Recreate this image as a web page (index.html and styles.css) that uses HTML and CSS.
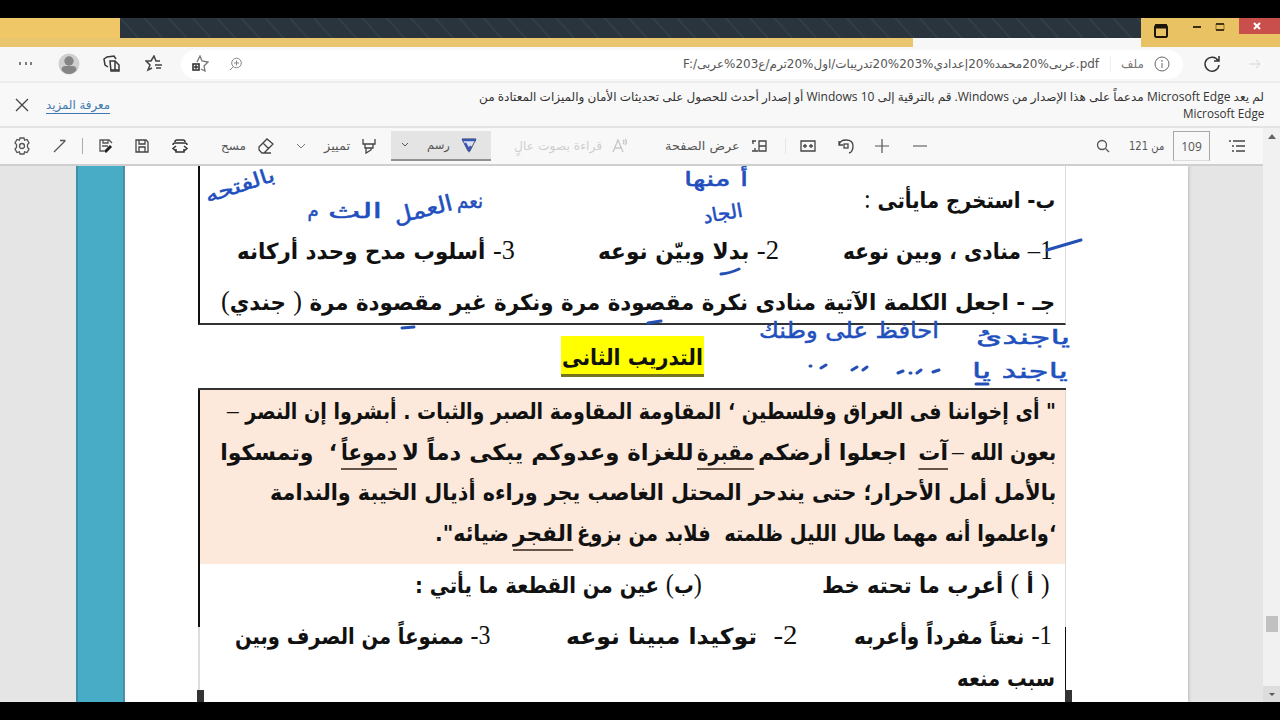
FILE: index.html
```
<!DOCTYPE html>
<html lang="ar">
<head>
  <meta charset="UTF-8">
  <title>عربى 3ع ترم اول.pdf</title>
  <link rel="stylesheet" href="styles.css">
</head>
<body>
  <div class="screen">
    <header class="titlebar">
      <div class="tab-gold"></div>
      <div class="tab-dark"></div>
      <div class="window-buttons">
        <svg class="tab-menu" width="16" height="16" viewBox="0 0 16 16"><path d="M3 2h10l1 2v9l-1 1H3l-1-1V4z" fill="none" stroke="#1d1606" stroke-width="2"/><path d="M2 4h12" stroke="#1d1606" stroke-width="3"/></svg>
        <svg class="min" width="10" height="12" viewBox="0 0 10 12"><path d="M1 7h8" stroke="#3c2c0d" stroke-width="2"/></svg>
        <svg class="max" width="10" height="12" viewBox="0 0 10 12"><path d="M1 3h8v6H1z" fill="none" stroke="#8f7135"/><path d="M1 3h8M1 9h8" stroke="#463614" stroke-width="2"/></svg>
        <div class="close"><svg width="8" height="8" viewBox="0 0 8 8"><path d="M1 1l6 6M7 1L1 7" stroke="#fff" stroke-width="2"/></svg></div>
      </div>
      <div class="strip-gold"></div>
      <div class="strip-light"></div>
    </header>

    <nav class="address-row">
      <svg class="dots" width="16" height="6" viewBox="0 0 16 6"><path d="M2 1v3M8 1v3M13 1v3" stroke="#555" stroke-width="1.5"/></svg>
      <svg class="avatar" width="22" height="22" viewBox="0 0 22 22"><circle cx="11" cy="11" r="10.5" fill="#cfcfcf"/><circle cx="11" cy="8" r="4.7" fill="#858585"/><path d="M3.5 17q0-4 4-4h7q4 0 4 4-3 4-7.500 4T3.500 17z" fill="#858585"/></svg>
      <svg class="collections" width="18" height="18" viewBox="0 0 18 18" fill="none" stroke="#383838" stroke-width="1.5"><path d="M5 12L2 10 1 4l3-2 7-1 2 3"/><path d="M7 6h5l4 4v6H8z"/><path d="M12 6v9M8 15h8"/></svg>
      <svg class="favorites" width="18" height="18" viewBox="0 0 18 18" fill="none" stroke="#444" stroke-width="1.500"><path d="M15 6h-4L9 1 6 6H1l4 4-2 5 4-2"/><path d="M10 10h7M11 13h5"/></svg>
      <div class="address">
        <svg class="add-star" width="18" height="18" viewBox="0 0 18 18" fill="none" stroke="#777" stroke-width="1.3"><path d="M6 7L9 1l2 5 6 1-4 4 1 5-4-2"/><rect x="2" y="9" width="6" height="6" stroke="#333" stroke-width="1.600"/><path d="M3 12h4M5 10v4" stroke="#333"/></svg>
        <svg class="page-zoom" width="14" height="14" viewBox="0 0 14 14" fill="none" stroke="#888"><circle cx="7.500" cy="6" r="4.800"/><path d="M5 6h5M7.500 3.500v5M4 10l-3 3"/></svg>
        <div class="url" dir="ltr"><span class="fit" data-width="416">F:/عربى%20محمد%20إعدادي%203%20تدريبات/اول%20ترم/ع203%عربى.pdf</span></div>
        <i class="url-sep"></i>
        <span class="file-label">ملف</span>
        <svg width="18" height="18" viewBox="0 0 18 18" fill="none" stroke="#666"><circle cx="9" cy="9" r="7"/><path d="M9 5v2M9 8v5"/></svg>
      </div>
      <svg class="refresh" width="20" height="20" viewBox="0 0 20 20" fill="none" stroke="#333" stroke-width="1.500"><path d="M16 6.500A7 7 0 1 0 17 11M17 2v5h-5"/></svg>
      <svg class="forward" width="12" height="12" viewBox="0 0 12 12" fill="none" stroke="#d5d5d5"><path d="M0 6h11M7 2l4 4-4 4"/></svg>
    </nav>

    <section class="notice">
      <svg class="dismiss" width="14" height="14" viewBox="0 0 14 14"><path d="M1 1l12 12M13 1L1 13" stroke="#444" stroke-width="1.300"/></svg>
      <a class="more"><span class="fit" data-width="64">معرفة المزيد</span></a>
      <div class="notice-text" dir="rtl">
        <div><span class="fit" data-width="785">لم يعد Microsoft Edge مدعماً على هذا الإصدار من Windows. قم بالترقية إلى Windows 10 أو إصدار أحدث للحصول على تحديثات الأمان والميزات المعتادة من</span></div>
        <div><span class="fit" data-width="81">Microsoft Edge</span></div>
      </div>
    </section>

    <div class="pdf-toolbar">
      <svg width="18" height="18" viewBox="0 0 18 18" fill="none" stroke="#555" stroke-width="1.300"><path d="M7 1h4l.6 2.200 2.400-.7 2 3.500-1.500 1.500v3L16 12l-2 3.500-2.400-.7L11 17H7l-.6-2.200-2.400.7L2 12l1.500-1.500v-3L2 6l2-3.500 2.400.7z"/><circle cx="9" cy="9" r="2.500"/></svg>
      <svg width="14" height="14" viewBox="0 0 14 14" fill="none" stroke="#555" stroke-width="1.300"><path d="M1 13L12 2M7 1.500h5.500"/></svg>
      <i class="divider"></i>
      <svg width="16" height="16" viewBox="0 0 16 16" fill="none" stroke="#555" stroke-width="1.300"><path d="M6 13H2V2h9l3 3M5 2v3h5V2M4 8h6"/><path d="M7 14l6-6" stroke="#222" stroke-width="3"/></svg>
      <svg width="16" height="16" viewBox="0 0 16 16" fill="none" stroke="#444" stroke-width="1.300"><path d="M2 14V2h10l2 2v10H2zM5 2v4h6V2M5 14V9h6v5"/></svg>
      <svg width="18" height="16" viewBox="0 0 18 16" fill="none" stroke="#333" stroke-width="1.500"><path d="M2 7q0-2 2-2h10q2 0 2 2M4 4q0-2 2-2h6q2 0 2 2M5 11v3h8v-3"/><path d="M5 8l-3 2.500L5 13M13 8l3 2.500-3 2.500"/></svg>
      <span class="label"><span class="fit" data-width="25">مسح</span></span>
      <svg width="18" height="18" viewBox="0 0 18 18" fill="none" stroke="#444" stroke-width="1.300"><path d="M2 10l8-8 6 5-9 9H5l-3-3zM6 6l6 6M7 16h7"/></svg>
      <svg width="10" height="6" viewBox="0 0 10 6" fill="none" stroke="#777"><path d="M1 1l4 4 4-4"/></svg>
      <span class="label"><span class="fit" data-width="26">تمييز</span></span>
      <svg width="16" height="18" viewBox="0 0 16 18" fill="none" stroke="#444" stroke-width="1.300"><path d="M2 2v5h12V2M4 7v4h8V7M5 11v5l5-3v-2"/></svg>
      <div class="draw">
        <svg width="8" height="6" viewBox="0 0 8 6" fill="none" stroke="#555"><path d="M1 1l3 3 3-3"/></svg>
        <span class="fit" data-width="23">رسم</span>
        <svg width="18" height="16" viewBox="0 0 18 16"><path d="M2 2h14l-6 12H8z" fill="#dce2f5" stroke="#555"/><path d="M2 3h14M5 6l4 7 2-4" stroke="#3a57b0" stroke-width="2.500" fill="none"/></svg>
      </div>
      <span class="label faded"><span class="fit" data-width="88">قراءة بصوت عالٍ</span></span>
      <svg width="16" height="16" viewBox="0 0 16 16" fill="none" stroke="#c6c6c6" stroke-width="1.300"><path d="M1 14L6 2l5 12M3 10h6M11 2q2 2 0 4M13 1q3 3 0 6"/></svg>
      <span class="label"><span class="fit" data-width="75">عرض الصفحة</span></span>
      <svg width="16" height="14" viewBox="0 0 16 14" fill="none" stroke="#444" stroke-width="1.300"><path d="M8 2h7v10H8zM8 7h7M1 2h4M1 12h6M2 2v3M4 9v3"/></svg>
      <i class="divider light"></i>
      <svg width="16" height="14" viewBox="0 0 16 14" fill="none" stroke="#444" stroke-width="1.300"><path d="M1 2h14v10H1zM3 7h4M9 7h4M5 5v4M11 5v4"/></svg>
      <svg width="18" height="18" viewBox="0 0 18 18" fill="none" stroke="#444" stroke-width="1.300"><path d="M2 8q1-5 7-5 7 0 7 6t-4 7M2 4v4h4"/><rect x="7" y="7" width="4" height="4"/></svg>
      <svg width="14" height="14" viewBox="0 0 14 14"><path d="M0 7h14M7 0v14" stroke="#555" stroke-width="1.200"/></svg>
      <svg width="14" height="14" viewBox="0 0 14 14"><path d="M0 7h14" stroke="#666" stroke-width="1.200"/></svg>
      <svg class="label" width="14" height="14" viewBox="0 0 14 14" fill="none" stroke="#555" stroke-width="1.300"><circle cx="6" cy="6" r="4.500"/><path d="M9.500 9.500L13 13"/></svg>
      <span class="label"><span class="fit" data-width="35">من 121</span></span>
      <span class="label page-number">109</span>
      <svg width="18" height="12" viewBox="0 0 18 12" fill="none" stroke="#444" stroke-width="1.500"><path d="M5 1h12M8 6h9M8 11h9M1 1h2M4 6h2M4 11h2"/></svg>
    </div>

    <main class="viewer">
      <div class="page-edge"></div>
      <div class="page" dir="rtl">
        <section class="box box-top">
          <div class="row"><span class="fit" data-width="191">ب- استخرج مايأتى <b>:</b></span></div>
          <div class="row items">
            <span class="fit" data-width="209"><b>1–</b> منادى ، وبين نوعه</span>
            <span class="fit second" data-width="181"><b>2-</b> بدلا وبيّن نوعه</span>
            <span class="fit third" data-width="278"><b>3-</b> أسلوب مدح وحدد أركانه</span>
          </div>
          <div class="row"><span class="fit" data-width="834">جـ - اجعل الكلمة الآتية منادى نكرة مقصودة مرة ونكرة غير مقصودة مرة <b>(</b> جندي<b>)</b></span></div>
        </section>

        <h2><span class="fit" data-width="141">التدريب الثانى</span></h2>

        <section class="box-bottom">
          <div class="passage">
            <p><span class="fit" data-width="829">" أى إخواننا فى العراق وفلسطين ‘ المقاومة المقاومة الصبر والثبات . أبشروا إن النصر <b>–</b></span></p>
            <p>
              <span class="fit" data-width="104">بعون الله <b>–</b></span>
              <span class="fit" data-width="30"><u>آت</u></span>
              <span class="fit" data-width="156">&nbsp;اجعلوا أرضكم</span>
              <span class="fit" data-width="57"><u>مقبرة</u></span>
              <span class="fit" data-width="292">للغزاة وعدوكم يبكى دماً لا</span>
              <span class="fit" data-width="56"><u>دموعاً</u></span>
              <span class="fit" data-width="117">‘&nbsp; وتمسكوا</span>
            </p>
            <p><span class="fit" data-width="786">بالأمل أمل الأحرار؛ حتى يندحر المحتل الغاصب يجر وراءه أذيال الخيبة والندامة</span></p>
            <p>
              <span class="fit" data-width="479">‘واعلموا أنه مهما طال الليل ظلمته&nbsp; فلابد من بزوغ</span>
              <span class="fit" data-width="60"><u>الفجر</u></span>
              <span class="fit" data-width="74">ضيائه".</span>
            </p>
          </div>
          <div class="row questions">
            <span class="fit" data-width="228"><b>(</b> أ <b>)</b> أعرب ما تحته خط</span>
            <span class="fit second" data-width="287"><b>(</b>ب<b>)</b> عين من القطعة ما يأتي :</span>
          </div>
          <div class="row answers">
            <span class="fit" data-width="198"><b>1-</b> نعتاً مفرداً وأعربه</span>
            <span class="fit second" data-width="231"><b>2-</b>&nbsp; توكيدا مبينا نوعه</span>
            <span class="fit third" data-width="255"><b>3-</b> ممنوعاً من الصرف وبين</span>
          </div>
          <div class="row last"><span class="fit" data-width="98">سبب منعه</span></div>
        </section>
      </div>

      <!-- pen annotations -->
      <svg class="ink" width="1280" height="536" viewBox="0 166 1280 536">
        <g class="ink-text">
          <text x="240" y="192" font-size="20" textLength="72" lengthAdjust="spacingAndGlyphs" transform="rotate(-18 240 186)">بالفتحه</text>
          <text x="470" y="208" font-size="20" textLength="26" lengthAdjust="spacingAndGlyphs">نعم</text>
          <text x="423" y="217" font-size="22" textLength="60" lengthAdjust="spacingAndGlyphs" transform="rotate(-14 423 210)">العمل</text>
          <text x="355" y="218" font-size="21" textLength="54" lengthAdjust="spacingAndGlyphs">الث</text>
          <text x="313" y="217" font-size="18">م</text>
          <text x="716" y="186" font-size="20" textLength="64" lengthAdjust="spacingAndGlyphs">أ منها</text>
          <text x="723" y="220" font-size="19" textLength="40" lengthAdjust="spacingAndGlyphs" transform="rotate(-10 723 215)">الجاد</text>
          <text x="1023" y="344" font-size="20" textLength="94" lengthAdjust="spacingAndGlyphs">ياجندىُ</text>
          <text x="849" y="338" font-size="22" textLength="180" lengthAdjust="spacingAndGlyphs">احافظ على وطنك</text>
          <text x="1020" y="378" font-size="21" textLength="96" lengthAdjust="spacingAndGlyphs">ياجند يا</text>
        </g>
        <path d="M1047 250q17-5 34-10M721 274q10-1 18-5M648 323l13-2M402 328l12-1M976 384h12M810 366l1 0M821 368l5-3M852 370l5-3M863 370l4-3M898 373l5-2M910 373l1 0M917 373l4-3M933 372l6-2"/>
      </svg>
      <div class="crop-marks"><i></i><i></i></div>
    </main>

    <aside class="scrollbar">
      <svg width="8" height="5" viewBox="0 0 8 5"><path d="M0 5l4-5 4 5z" fill="#666"/></svg>
      <div class="thumb"></div>
      <div class="scroll-down"><svg width="6" height="4" viewBox="0 0 6 4"><path d="M0 1h6L3 4z" fill="#555"/></svg></div>
    </aside>
  </div>
  <script src="script.js"></script>
</body>
</html>
```
FILE: styles.css
```
* {
  box-sizing: border-box;
}

body {
  margin: 0;
  background: #000;
  font-family: "DejaVu Sans", sans-serif;
  overflow: hidden;
}

svg {
  display: block;
  flex: none;
}

.screen {
  position: relative;
  width: 1280px;
  height: 720px;
  padding: 18px 0;
  background: #000;
}

.fit {
  display: block;
  flex: none;
  white-space: nowrap;
}

.fit > span {
  display: inline-block;
}

/* window frame */
.titlebar {
  display: grid;
  grid-template-columns: 120px 793px 228px 139px;
  grid-template-rows: 20px 9px;
  height: 29px;
}

.tab-gold {
  background: #efc767;
}

.tab-dark {
  grid-column: 2 / 4;
  background: repeating-linear-gradient(48deg, #29343c 0 12px, #303e47 13px 14px, #29343c 15px 18px);
}

.window-buttons {
  grid-column: 4;
  grid-row: 1 / 3;
  display: flex;
  background: #e9c263;
}

.tab-menu {
  margin: 5px 0 0 12px;
}

.min {
  margin: 2px 0 0 23px;
}

.max {
  margin: 3px 0 0 13px;
}

.close {
  display: flex;
  align-items: center;
  justify-content: center;
  width: 41px;
  height: 16px;
  margin-left: auto;
  background: #c94f4c;
}

.close svg {
  margin-right: 6px;
}

.strip-gold {
  grid-column: 1 / 3;
  grid-row: 2;
  background: #e9c56f;
}

.strip-light {
  background: #f7f7f7;
  grid-row: 2;
}

/* address bar */
.address-row {
  display: flex;
  align-items: center;
  height: 36px;
  background: #f7f7f7;
  border-bottom: 2px solid #ececec;
}

.dots {
  margin-left: 18px;
}

.avatar {
  margin-left: 24px;
}

.collections {
  margin-left: 23px;
}

.favorites {
  margin-left: 24px;
}

.address {
  display: flex;
  align-items: center;
  width: 1002px;
  height: 29px;
  margin-left: 18px;
  padding: 0 12px 0 10px;
  border-radius: 15px;
  background: #fff;
}

.page-zoom {
  margin-left: 20px;
}

.url {
  margin-left: 440px;
  font-size: 12px;
  color: #555;
}

.url-sep {
  width: 1px;
  height: 16px;
  margin-left: 11px;
  background: #eee;
}

.file-label {
  width: 26px;
  margin: 0 6px 0 10px;
  font-size: 12px;
  color: #777;
}

.refresh {
  margin-left: 19px;
}

.forward {
  margin-left: 27px;
}

/* notification */
.notice {
  display: flex;
  height: 45px;
  background: #f8f8f8;
  border-bottom: 2px solid #e4e4e4;
}

.dismiss {
  margin: 15px 0 0 15px;
}

.more {
  margin: 14px 0 0 17px;
  font-size: 12px;
  line-height: 16px;
  color: #3f78b0;
}

.more .fit {
  border-bottom: 1px solid #3f78b0;
}

.notice-text {
  flex: 1;
  margin: 5px 16px 0 0;
  font-family: "Open Sans", "DejaVu Sans", sans-serif;
  font-size: 12px;
  line-height: 17px;
  color: #333;
}

/* pdf toolbar */
.pdf-toolbar {
  display: grid;
  grid-template-columns: 44px 32px 12px 36px 36px 40px 46px 39px 32px 33px 37px 104px 111px 36px 102px 37px 16px 30px 46px 26px 50px 165px 54px 46px 54px;
  align-items: center;
  justify-items: center;
  width: 1264px;
  height: 38px;
  background: #f8f8f8;
  border-bottom: 2px solid #cfcfcf;
  font-size: 12px;
  color: #555;
}

.label {
  justify-self: end;
}

.faded {
  color: #cfcfcf;
}

.divider {
  width: 1px;
  height: 16px;
  background: #aaa;
}

.divider.light {
  background: #e6e6e6;
}

.draw {
  display: flex;
  align-items: center;
  justify-self: end;
  width: 100px;
  height: 30px;
  padding: 0 10px;
  background: #e4e4e4;
  border-bottom: 2px solid #919191;
}

.draw .fit {
  margin: 0 10px 0 18px;
}

.page-number {
  width: 37px;
  height: 30px;
  border: 1px solid #a8a8a8;
  border-bottom-color: #ddd;
  font: 12px/30px "Open Sans", sans-serif;
  text-align: center;
}

/* document */
.viewer {
  position: relative;
  display: flex;
  height: 536px;
  padding-left: 76px;
  background: #e5e5e5;
  overflow: hidden;
}

.page-edge {
  width: 49px;
  background: #49acc6;
  border-left: 2px solid #3c91a8;
  border-right: 2px solid #3b8da4;
}

.page {
  width: 1063px;
  padding: 0 122px 0 73px;
  background: #fff;
  box-shadow: 1px 0 3px #bbb;
  color: #111;
  font-size: 22px;
  font-weight: bold;
}

.page b {
  font-family: "Liberation Serif", serif;
  font-size: 27px;
  font-weight: normal;
  line-height: 1;
}

.box-top {
  height: 159px;
  padding-top: 9px;
  border-left: 2px solid #111;
  border-right: 1px solid #ddd;
  border-bottom: 2px solid #333;
}

.row {
  display: flex;
  height: 51px;
  padding-right: 10px;
  line-height: 51px;
}

.row.items,
.row.answers {
  padding-right: 13px;
}

.items .second {
  margin-right: 64px;
}

.items .third {
  margin-right: 83px;
}

h2 {
  width: 143px;
  height: 41px;
  margin: 11px 362px 11px 0;
  padding-right: 1px;
  background: #ff0;
  border-bottom: 3px solid #77751c;
  font-size: 22px;
  line-height: 44px;
}

/* the side rules change weight part way down */
.box-bottom {
  height: 315px;
  padding: 0 1px 0 2px;
  border-top: 2px solid #333;
  background:
    linear-gradient(#111 0 237px, #ddd 237px) left / 2px 100% no-repeat,
    linear-gradient(#e2d8d2 0 237px, #111 237px) right / 1px 100% no-repeat;
}

.passage {
  height: 174px;
  padding: 2px 9px 0 0;
  background: #fce9db;
}

.passage p {
  display: flex;
  gap: 4px;
  height: 40.5px;
  margin: 0;
  line-height: 40px;
}

.passage u {
  text-decoration-thickness: 2px;
  text-underline-offset: 8px;
  text-decoration-color: #66554a;
}

.row.questions {
  padding-right: 15px;
  height: 47px;
  line-height: 43px;
}

.questions .second {
  margin-right: 120px;
}

.answers .second {
  margin-right: 57px;
}

.answers .third {
  margin-right: 76px;
}

.row.last {
  height: 36px;
  line-height: 34px;
}

.ink {
  position: absolute;
  left: 0;
  top: 0;
  fill: none;
  stroke: #2450b5;
  stroke-width: 3;
  stroke-linecap: round;
}

.ink-text {
  fill: #1f50bd;
  stroke: #1f50bd;
  stroke-width: 0.5;
  text-anchor: middle;
}

.crop-marks {
  position: absolute;
  left: 197px;
  bottom: 0;
  display: flex;
  justify-content: space-between;
  width: 875px;
}

.crop-marks i {
  width: 7px;
  height: 12px;
  background: #333;
}

/* scrollbar */
.scrollbar {
  position: absolute;
  right: 0;
  top: 128px;
  display: flex;
  flex-direction: column;
  align-items: center;
  width: 17px;
  height: 574px;
  padding-top: 6px;
  background: #f1f1f1;
}

.thumb {
  width: 12px;
  height: 16px;
  margin-top: 477px;
  background: #c1c1c1;
}

.scroll-down {
  display: flex;
  align-items: center;
  justify-content: center;
  width: 17px;
  height: 16px;
  margin-top: auto;
  background: #ddd;
}
```
FILE: script.js
```
// squeeze or stretch each run of text to the width of its column
document.querySelectorAll(".fit").forEach(el => {
  const inner = document.createElement("span");
  while (el.firstChild) inner.appendChild(el.firstChild);
  el.appendChild(inner);

  const rtl = getComputedStyle(el).direction === "rtl";
  const scale = el.dataset.width / inner.offsetWidth;
  inner.style.transformOrigin = rtl ? "right center" : "left center";
  inner.style.transform = `scaleX(${scale})`;
  el.style.width = el.dataset.width + "px";
});
```
